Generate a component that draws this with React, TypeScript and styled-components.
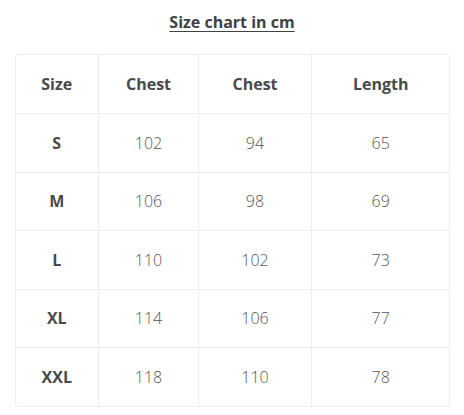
import React from "react";
import styled, { createGlobalStyle } from "styled-components";

const Global = createGlobalStyle`
  html, body { margin: 0; padding: 0; background: #fff; }
  body { font-family: "Open Sans", "Liberation Sans", sans-serif; }
`;

const Page = styled.div`
  width: 464px;
  padding-top: 11px;
  display: flex;
  flex-direction: column;
  align-items: center;
`;

const Title = styled.h2`
  margin: 0;
  font-size: 16px;
  line-height: 22px;
  font-weight: 700;
  color: #3d4246;
  text-decoration: underline;
  text-underline-offset: 3px;
  text-decoration-thickness: 1px;
`;

const TableFrame = styled.div`
  margin-top: 21px;
  width: 435px;
  border: 1px solid #ececec;
  border-radius: 3px;
  overflow: hidden;
  box-sizing: border-box;
`;

const Table = styled.table`
  width: 100%;
  border-collapse: collapse;
  table-layout: fixed;
`;

const Row = styled.tr`
  height: 58.5px;
  & + & > * { border-top: 1px solid #ececec; }
`;

const Cell = styled.td<{ $head?: boolean }>`
  padding: 0;
  text-align: center;
  vertical-align: middle;
  font-size: 16px;
  color: ${(p) => (p.$head ? "#4a4a4a" : "#555")};
  font-weight: ${(p) => (p.$head ? 700 : 300)};
  & + & { border-left: 1px solid #ececec; }
`;

const widths = [83, 100, 113, 138];
const header = ["Size", "Chest", "Chest", "Length"];
const rows = [
  ["S", "102", "94", "65"],
  ["M", "106", "98", "69"],
  ["L", "110", "102", "73"],
  ["XL", "114", "106", "77"],
  ["XXL", "118", "110", "78"],
];

export default function App() {
  return (
    <>
      <Global />
      <Page>
        <Title>Size chart in cm</Title>
        <TableFrame>
          <Table>
            <colgroup>
              {widths.map((w, i) => (
                <col key={i} style={{ width: w }} />
              ))}
            </colgroup>
            <tbody>
              <Row>
                {header.map((h, i) => (
                  <Cell as="th" key={i} $head>
                    {h}
                  </Cell>
                ))}
              </Row>
              {rows.map((r, ri) => (
                <Row key={ri}>
                  {r.map((c, ci) => (
                    <Cell key={ci} $head={ci === 0}>
                      {c}
                    </Cell>
                  ))}
                </Row>
              ))}
            </tbody>
          </Table>
        </TableFrame>
      </Page>
    </>
  );
}
